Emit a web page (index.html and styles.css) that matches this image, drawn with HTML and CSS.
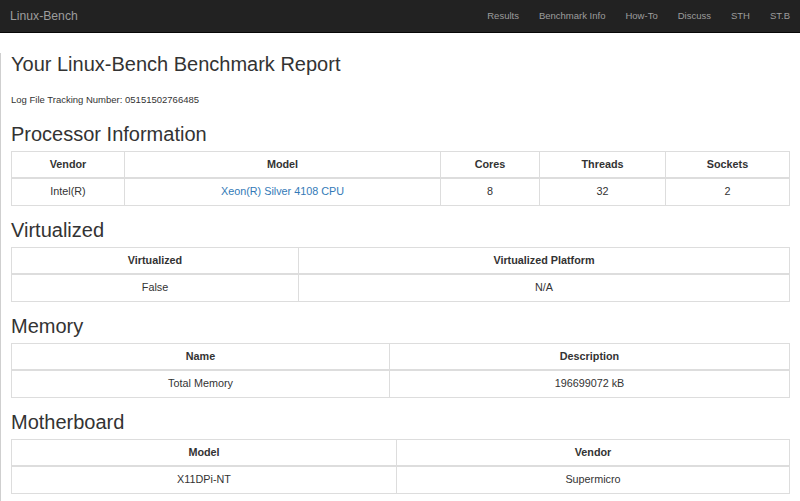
FILE: index.html
```html
<!DOCTYPE html>
<html>
<head>
<meta charset="utf-8">
<title>Linux-Bench</title>
<link rel="stylesheet" href="styles.css">
</head>
<body>
<nav class="navbar">
  <a class="brand" href="#">Linux-Bench</a>
  <ul class="nav">
    <li><a href="#">Results</a></li>
    <li><a href="#">Benchmark Info</a></li>
    <li><a href="#">How-To</a></li>
    <li><a href="#">Discuss</a></li>
    <li><a href="#">STH</a></li>
    <li><a href="#">ST.B</a></li>
  </ul>
</nav>
<main class="page">
  <h1 class="title">Your Linux-Bench Benchmark Report</h1>
  <p class="tracking">Log File Tracking Number: 05151502766485</p>

  <h2 class="section">Processor Information</h2>
  <table class="grid">
    <colgroup>
      <col class="w113"><col class="w316"><col class="w99"><col class="w126"><col>
    </colgroup>
    <thead>
      <tr><th>Vendor</th><th>Model</th><th>Cores</th><th>Threads</th><th>Sockets</th></tr>
    </thead>
    <tbody>
      <tr><td>Intel(R)</td><td><a href="#">Xeon(R) Silver 4108 CPU</a></td><td>8</td><td>32</td><td>2</td></tr>
    </tbody>
  </table>

  <h2 class="section">Virtualized</h2>
  <table class="grid">
    <colgroup><col class="w287"><col></colgroup>
    <thead>
      <tr><th>Virtualized</th><th>Virtualized Platform</th></tr>
    </thead>
    <tbody>
      <tr><td>False</td><td>N/A</td></tr>
    </tbody>
  </table>

  <h2 class="section">Memory</h2>
  <table class="grid">
    <colgroup><col class="w378"><col></colgroup>
    <thead>
      <tr><th>Name</th><th>Description</th></tr>
    </thead>
    <tbody>
      <tr><td>Total Memory</td><td>196699072 kB</td></tr>
    </tbody>
  </table>

  <h2 class="section">Motherboard</h2>
  <table class="grid">
    <colgroup><col class="w385"><col></colgroup>
    <thead>
      <tr><th>Model</th><th>Vendor</th></tr>
    </thead>
    <tbody>
      <tr><td>X11DPi-NT</td><td>Supermicro</td></tr>
    </tbody>
  </table>
</main>
</body>
</html>
```

FILE: styles.css
```css
* { box-sizing: border-box; }

html, body {
  margin: 0;
  padding: 0;
  background: #fff;
}

body {
  font-family: "Liberation Sans", Arial, Helvetica, sans-serif;
  font-size: 9.5px;
  line-height: 13.6px;
  color: #333;
}

.navbar {
  display: flex;
  align-items: center;
  justify-content: space-between;
  height: 33px;
  background: #222;
  border-bottom: 1px solid #080808;
}

.brand {
  padding: 0 10px;
  font-size: 12.2px;
  line-height: 32px;
  color: #9d9d9d;
  text-decoration: none;
}

.nav {
  display: flex;
  list-style: none;
  margin: 0;
  padding: 0;
}

.nav a {
  display: block;
  padding: 0 10px;
  font-size: 9.5px;
  line-height: 32px;
  color: #9d9d9d;
  text-decoration: none;
}

.page {
  border-left: 1px solid #cfcfcf;
  padding: 0 10px;
  min-height: 468px;
}

.title {
  margin: 20px 0 18px 0;
  font-size: 20px;
  line-height: 22px;
  font-weight: 400;
  color: #333;
}

.tracking {
  margin: 0 0 16px 0;
}

.section {
  margin: 0 0 6px 0;
  font-size: 20px;
  line-height: 22px;
  font-weight: 400;
  color: #333;
}

.grid {
  width: 100%;
  table-layout: fixed;
  border-collapse: collapse;
  margin: 0 0 13px 0;
  font-size: 10.8px;
  line-height: 15px;
}

.grid:last-child {
  margin-bottom: 0;
}

.grid th,
.grid td {
  border: 1px solid #ddd;
  padding: 5px;
  text-align: center;
  vertical-align: middle;
}

.grid td {
  padding-bottom: 6px;
}

.grid th {
  font-weight: 700;
  border-bottom: 2px solid #ddd;
}

.grid a {
  color: #337ab7;
  text-decoration: none;
}

.w113 { width: 113px; }
.w316 { width: 316px; }
.w99 { width: 99px; }
.w126 { width: 126px; }
.w287 { width: 287px; }
.w378 { width: 378px; }
.w385 { width: 385px; }
```
